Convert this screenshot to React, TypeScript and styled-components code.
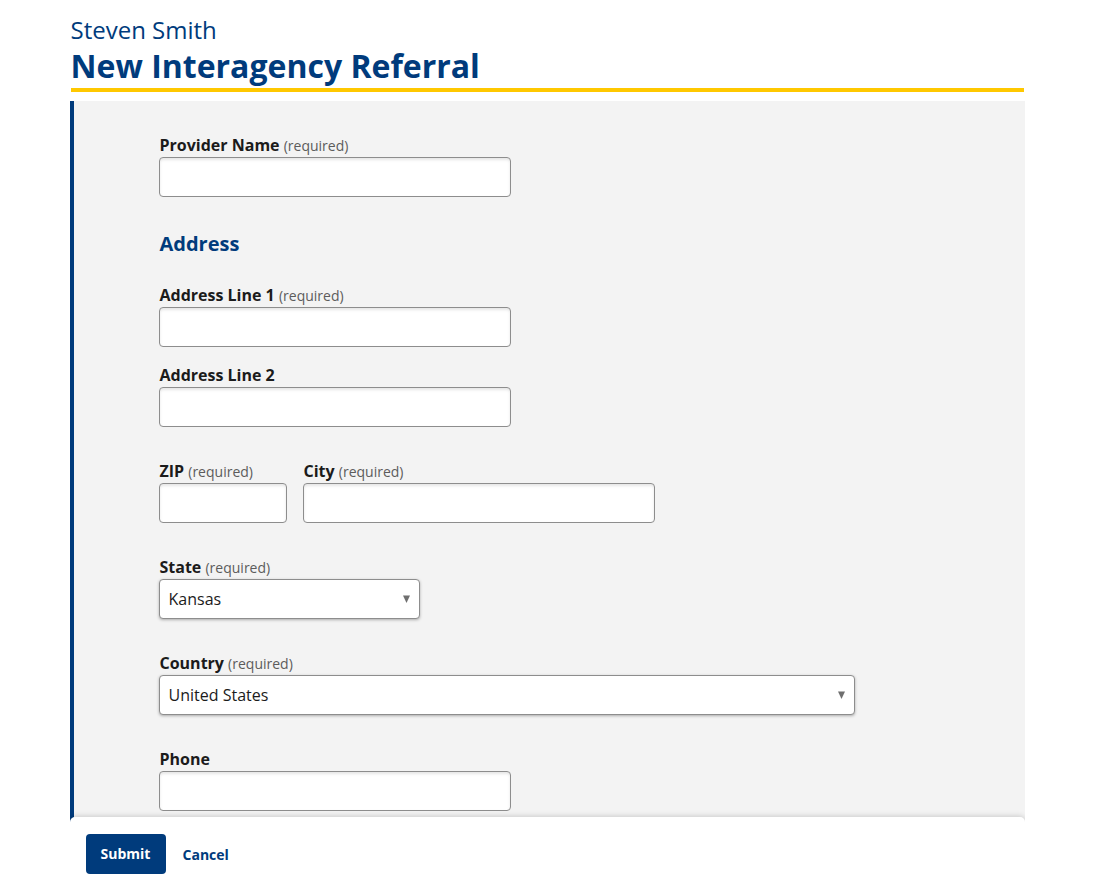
import React from 'react';
import styled, { createGlobalStyle } from 'styled-components';

const navy = '#003b7c';

const GlobalStyle = createGlobalStyle`
  html, body {
    margin: 0;
    padding: 0;
    background: #fff;
    overflow: hidden;
  }
  body {
    font-family: 'Open Sans', 'Noto Sans', sans-serif;
    color: #1b1b1b;
  }
  * {
    box-sizing: border-box;
  }
`;

const Container = styled.div`
  position: relative;
  width: 955px;
  height: 100vh;
  margin: 0 auto;
  display: flex;
  flex-direction: column;
  overflow: hidden;
`;

const Header = styled.header`
  padding: 14px 1px 0;
`;

const Subtitle = styled.div`
  font-size: 24px;
  line-height: 32px;
  color: ${navy};
`;

const Title = styled.h1`
  margin: 0;
  font-size: 32px;
  line-height: 39px;
  font-weight: 700;
  color: ${navy};
  padding-bottom: 3px;
  border-bottom: 4px solid #ffc800;
`;

const Panel = styled.main`
  flex: 1;
  margin-top: 9px;
  background: #f3f3f3;
  border-left: 4px solid ${navy};
  padding: 32px 0 0 85px;
`;

const Field = styled.div<{ $space?: number }>`
  margin-top: ${(p) => p.$space ?? 0}px;
`;

const Row = styled.div<{ $space?: number }>`
  display: flex;
  gap: 16px;
  margin-top: ${(p) => p.$space ?? 0}px;
`;

const Label = styled.label`
  display: block;
  height: 24px;
  font-size: 16px;
  line-height: 24px;
  font-weight: 700;
  color: #1b1b1b;
  padding-left: 1px;
`;

const Hint = styled.span`
  font-size: 14px;
  line-height: 1;
  font-weight: 400;
  color: #5c5c5c;
`;

const Input = styled.input<{ $width: number }>`
  display: block;
  width: ${(p) => p.$width}px;
  height: 40px;
  border: 1px solid #8d8d8d;
  border-radius: 4px;
  background: #fff;
  box-shadow: inset 0 2px 3px rgba(0, 0, 0, 0.1);
  font: inherit;
  font-size: 16px;
  padding: 0 9px;
`;

const SelectWrap = styled.div<{ $width: number }>`
  position: relative;
  width: ${(p) => p.$width}px;
`;

const Select = styled.select`
  display: block;
  width: 100%;
  height: 40px;
  appearance: none;
  border: 1px solid #8d8d8d;
  border-radius: 4px;
  background: #fff;
  box-shadow: 0 1px 3px rgba(0, 0, 0, 0.3);
  font: inherit;
  font-size: 16px;
  color: #1b1b1b;
  padding: 0 30px 0 9px;
`;

const Arrow = styled.svg`
  position: absolute;
  right: 10px;
  top: 16px;
  pointer-events: none;
`;

const Heading = styled.h2`
  margin: 34px 0 27px;
  font-size: 20px;
  line-height: 25px;
  font-weight: 700;
  color: ${navy};
  padding-left: 1px;
`;

const Footer = styled.footer`
  position: absolute;
  left: 0;
  right: 0;
  bottom: 0;
  height: 73px;
  background: #fff;
  border-radius: 5px 5px 0 0;
  box-shadow: 0 0 6px rgba(0, 0, 0, 0.22);
  display: flex;
  align-items: center;
  gap: 17px;
  padding: 0 16px;
`;

const Primary = styled.button`
  height: 40px;
  width: 80px;
  border: 0;
  border-radius: 4px;
  background: ${navy};
  color: #fff;
  font: inherit;
  font-size: 14px;
  font-weight: 700;
`;

const LinkButton = styled.button`
  border: 0;
  background: none;
  padding: 0;
  color: ${navy};
  font: inherit;
  font-size: 14px;
  font-weight: 700;
  margin-top: 2px;
`;

function Caret() {
  return (
    <Arrow width="7" height="8" viewBox="0 0 7 8">
      <path d="M0 0.5 H7 L3.5 8 Z" fill="#6f6f6f" />
    </Arrow>
  );
}

function TextField({ label, required, width, space }: { label: string; required?: boolean; width: number; space?: number }) {
  return (
    <Field $space={space}>
      <Label>
        {label} {required && <Hint>(required)</Hint>}
      </Label>
      <Input $width={width} />
    </Field>
  );
}

function SelectField({ label, value, width, space }: { label: string; value: string; width: number; space?: number }) {
  return (
    <Field $space={space}>
      <Label>
        {label} <Hint>(required)</Hint>
      </Label>
      <SelectWrap $width={width}>
        <Select defaultValue={value}>
          <option>{value}</option>
        </Select>
        <Caret />
      </SelectWrap>
    </Field>
  );
}

export default function App() {
  return (
    <>
      <GlobalStyle />
      <Container>
        <Header>
          <Subtitle>Steven Smith</Subtitle>
          <Title>New Interagency Referral</Title>
        </Header>
        <Panel>
          <TextField label="Provider Name" required width={352} />
          <Heading>Address</Heading>
          <TextField label="Address Line 1" required width={352} />
          <TextField label="Address Line 2" width={352} space={16} />
          <Row $space={32}>
            <TextField label="ZIP" required width={128} />
            <TextField label="City" required width={352} />
          </Row>
          <SelectField label="State" value="Kansas" width={261} space={32} />
          <SelectField label="Country" value="United States" width={696} space={32} />
          <TextField label="Phone" width={352} space={32} />
        </Panel>
        <Footer>
          <Primary>Submit</Primary>
          <LinkButton>Cancel</LinkButton>
        </Footer>
      </Container>
    </>
  );
}
